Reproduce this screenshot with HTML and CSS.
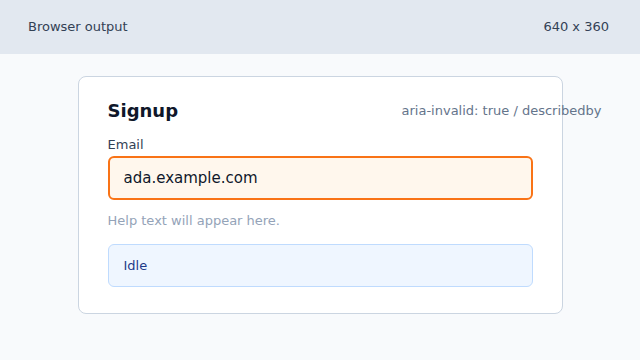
FILE: index.html
```html
<!DOCTYPE html>
<html>
<head>
<meta charset="utf-8">
<link rel="stylesheet" href="styles.css">
</head>
<body>
<div class="topbar">
  <span>Browser output</span>
  <span>640 x 360</span>
</div>
<main class="stage">
  <section class="card">
    <div class="card-head">
      <h1 class="title">Signup</h1>
      <span class="meta">aria-invalid: true / describedby</span>
    </div>
    <label class="label" for="email">Email</label>
    <input id="email" class="field" type="text" value="ada.example.com" aria-invalid="true" aria-describedby="help">
    <p id="help" class="help">Help text will appear here.</p>
    <div class="status">Idle</div>
  </section>
</main>
</body>
</html>
```
FILE: styles.css
```css
* { box-sizing: border-box; }
html, body { margin: 0; padding: 0; }
body {
  font-family: "DejaVu Sans", sans-serif;
  background: #f8fafc;
  width: 640px;
  height: 360px;
  overflow: hidden;
}
.topbar {
  height: 54px;
  background: #e2e8f0;
  display: flex;
  align-items: center;
  justify-content: space-between;
  padding: 0 31px 1px 28px;
  font-size: 13px;
  color: #334155;
}
.stage {
  padding-top: 22px;
}
.card {
  width: 485px;
  margin: 0 auto;
  background: #ffffff;
  border: 1px solid #cbd5e1;
  border-radius: 8px;
  padding: 23px 29px 26px 29px;
}
.card-head {
  display: flex;
  align-items: center;
  justify-content: space-between;
  margin-right: -69px;
  margin-bottom: 16px;
}
.title {
  margin: 0;
  font-size: 18px;
  font-weight: 700;
  color: #0f172a;
}
.meta {
  font-size: 13px;
  color: #64748b;
  white-space: nowrap;
}
.label {
  display: block;
  font-size: 13px;
  color: #334155;
  margin-bottom: 4px;
}
.field {
  display: block;
  width: 100%;
  height: 44px;
  border: 2px solid #f97316;
  border-radius: 6px;
  background: #fff7ed;
  padding: 0 14px;
  font-family: "DejaVu Sans", sans-serif;
  font-size: 15px;
  color: #0f172a;
  outline: none;
}
.help {
  margin: 13px 0 16px;
  font-size: 13px;
  color: #94a3b8;
}
.status {
  height: 43px;
  display: flex;
  align-items: center;
  border: 1px solid #bfdbfe;
  border-radius: 6px;
  background: #eff6ff;
  padding: 0 15px;
  font-size: 13px;
  color: #1e3a8a;
}
```
